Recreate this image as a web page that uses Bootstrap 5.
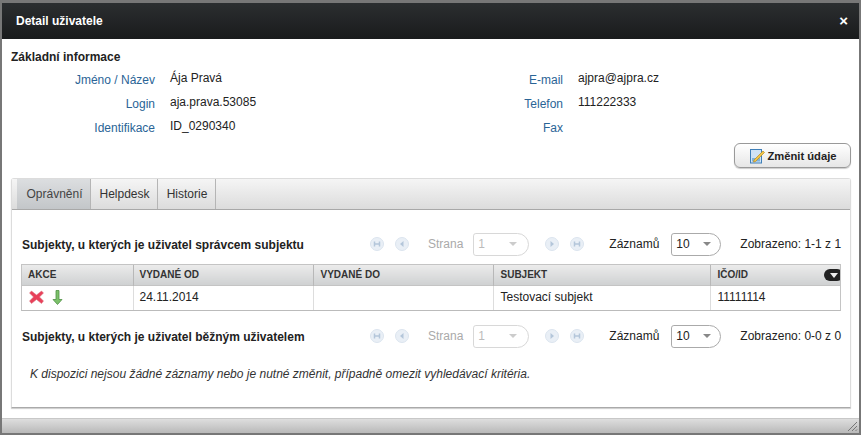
<!DOCTYPE html>
<html lang="cs"><head><meta charset="utf-8"><title>Detail uživatele</title>
<link rel="stylesheet" href="https://cdn.jsdelivr.net/npm/bootstrap@5.3.0/dist/css/bootstrap.min.css">
<style>
html,body{height:435px;overflow:hidden;background:#fff}
body{font:12px/14px "Liberation Sans",Arial,sans-serif;color:#222}
.dlg{height:435px;border:solid #777;border-width:3px 2px 2px 2px;background:#fff}
.dlg-title{height:36px;background:linear-gradient(#2b2e30,#191b1c);color:#fff;font-weight:700;padding:0 14px;flex:none}
.dlg-x{font-size:15px;line-height:14px;font-weight:700;margin-right:-3px;color:#fff}
.dlg-body{padding:0 8px 0 9px;flex:1;min-height:0}
.sect{font-weight:700;height:14px;margin-top:11px}
.inforow{height:24px}
.infocol{width:408px}
.lab{width:144px;text-align:right;color:#2a6496;padding-top:5px;flex:none}
.val{margin-left:15px;padding-top:3px}
.inforows{margin-top:4px}
.chgbtn{width:117px;height:25px;margin-top:3px;border:1px solid #999;border-radius:6px;background:linear-gradient(#fff,#e6e6e6);font-weight:700;font-size:11.2px;box-shadow:0 1px 1px #ccc;gap:3px;color:#222}
.tabpanel{height:231px;margin-top:10px;border:1px solid #dcdcdc;border-bottom-color:#aaa;border-radius:3px 3px 0 0;box-shadow:0 1px 1px #ccc}
.tabbar{height:31px;background:linear-gradient(#f5f5f5,#dcdcdc);border-bottom:1px solid #a8a8a8;padding-left:5px;flex:none}
.tabit{color:#333;border-right:1px solid #b5b5b5;height:30px;display:flex;align-items:center;justify-content:center;text-decoration:none}
.tabit.on{background:linear-gradient(#dcdee0,#c3c6c9);width:74px;padding-left:2px;color:#444}
.tabit.tb2{width:67px;padding-left:1px}
.tabit.tb3{width:58px;padding-left:1px}
.tabinner{padding:0 10px}
.pgrow{height:24px}
.pgrow.r1{margin-top:22px}
.pgrow.r2{margin-top:13px}
.pgtitle{width:348px;font-weight:700;flex:none;padding-top:2px}
.pgic{width:14px;height:14px;flex:none}
.pgic1{margin-right:11px}
.pgic3{margin:0 11px 0 16px}
.strana{color:#aaa;margin:0 10px 0 19px;width:36px}
.sel{width:56px;height:23px;border:1px solid #d8d8d8;border-radius:3px 12px 12px 3px;padding-left:4px;color:#bbb;justify-content:space-between;padding-right:11px;flex:none}
.sel.act{width:50px;border-color:#aaa;color:#222;padding-right:9px;margin-left:12px}
.caret{width:0;height:0;border:4px solid transparent;border-top:4px solid #888;border-bottom:0}
.sel:not(.act) .caret{border-top-color:#ccc}
.zaz{margin-left:25px;width:50px}
.zob{margin-left:19px;white-space:nowrap}
.gridwrap{margin:8px 0 0 -1px;width:820px;height:47px;border:1px solid #c4c4c4;border-bottom-color:#bbb;position:relative;overflow:hidden}
.gridt{width:818px;table-layout:fixed;margin:0;--bs-table-bg:transparent;border-collapse:collapse;font-size:12px}
.gridt th{height:20px;padding:0 6px;font-size:10px;font-weight:700;color:#333;background:linear-gradient(#ebebeb,#cfd1d2);border:0;border-right:1px solid #b8b8b8;vertical-align:middle}
.gridt td{height:25px;padding:0 6px 2px;border:0;border-right:1px solid #ddd;vertical-align:middle;color:#222}
.gridt tr>*:nth-child(n+3){padding-left:7px}
.gridt tr>*:last-child{border-right:0}
.gridt thead{border-bottom:1px solid #c4c4c4}
.acts{gap:8px;padding-top:1px;padding-left:1px}
.colmenu{position:absolute;right:-3px;top:4px;width:19px;height:12px;border-radius:6px;background:#222;display:flex;align-items:center;justify-content:center}
.colmenu i{display:block;width:0;height:0;border:4px solid transparent;border-top:5px solid #eee;border-bottom:0}
.note{font-style:italic;margin:19px 0 0 8px;color:#333}
.dlg-foot{height:15px;margin-top:10px;background:linear-gradient(#dedede,#b9b9b9);border-top:1px solid #c8c8c8;flex:none;position:relative}
.grip{position:absolute;right:1px;bottom:1px}
</style></head>
<body>
<div class="dlg d-flex flex-column">
  <div class="dlg-title d-flex align-items-center justify-content-between"><span>Detail uživatele</span><span class="dlg-x">×</span></div>
  <div class="dlg-body d-flex flex-column">
    <div class="sect">Základní informace</div>
    <div class="d-flex inforows">
      <div class="infocol">
        <div class="d-flex inforow"><div class="lab">Jméno / Název</div><div class="val">Ája Pravá</div></div>
        <div class="d-flex inforow"><div class="lab">Login</div><div class="val">aja.prava.53085</div></div>
        <div class="d-flex inforow"><div class="lab">Identifikace</div><div class="val">ID_0290340</div></div>
      </div>
      <div class="infocol">
        <div class="d-flex inforow"><div class="lab">E-mail</div><div class="val">ajpra@ajpra.cz</div></div>
        <div class="d-flex inforow"><div class="lab">Telefon</div><div class="val">111222333</div></div>
        <div class="d-flex inforow"><div class="lab">Fax</div><div class="val"></div></div>
      </div>
    </div>
    <div class="d-flex justify-content-end">
      <div class="chgbtn d-flex align-items-center justify-content-center">
        <svg width="16" height="16" viewBox="0 0 16 16"><rect x="1.5" y="1.5" width="11" height="13.500" fill="#cfe3f5" stroke="#3f7fb8"/><rect x="3" y="10" width="8" height="3.500" fill="#7fb2dd"/><path d="M5 12 L14 3 L15.500 4.500 L6.500 13.500 L4.500 14Z" fill="#f0c64a" stroke="#b98a1e" stroke-width=".7"/></svg>
        <span>Změnit údaje</span>
      </div>
    </div>
    <div class="tabpanel d-flex flex-column">
      <div class="tabbar d-flex">
        <a class="tabit on">Oprávnění</a><a class="tabit tb2">Helpdesk</a><a class="tabit tb3">Historie</a>
      </div>
      <div class="tabinner">
        <div class="pgrow r1 d-flex align-items-center">
          <div class="pgtitle">Subjekty, u kterých je uživatel správcem subjektu</div>
          <svg class="pgic pgic1" viewBox="0 0 14 14"><circle cx="7" cy="7" r="6.500" fill="#e9eff6" stroke="#dbe4ee"/><path d="M4.500 4.500v5M9.500 4.500v5M4.500 7h5" stroke="#b4c6da" stroke-width="1.500" fill="none"/></svg>
          <svg class="pgic" viewBox="0 0 14 14"><circle cx="7" cy="7" r="6.500" fill="#e9eff6" stroke="#dbe4ee"/><path d="M8.500 4v6L5 7z" fill="#b4c6da"/></svg>
          <span class="strana">Strana</span>
          <div class="sel d-flex align-items-center"><span>1</span><i class="caret"></i></div>
          <svg class="pgic pgic3" viewBox="0 0 14 14"><circle cx="7" cy="7" r="6.500" fill="#e9eff6" stroke="#dbe4ee"/><path d="M5.500 4v6L9 7z" fill="#b4c6da"/></svg>
          <svg class="pgic" viewBox="0 0 14 14"><circle cx="7" cy="7" r="6.500" fill="#e9eff6" stroke="#dbe4ee"/><path d="M4.500 4.500v5M9.500 4.500v5M4.500 7h5" stroke="#b4c6da" stroke-width="1.500" fill="none"/></svg>
          <span class="zaz">Záznamů</span>
          <div class="sel act d-flex align-items-center"><span>10</span><i class="caret"></i></div>
          <span class="zob">Zobrazeno: 1-1 z 1</span>
        </div>
        <div class="gridwrap">
          <table class="table gridt">
            <colgroup><col style="width:111px"><col style="width:180px"><col style="width:180px"><col style="width:217px"><col></colgroup>
            <thead><tr><th>AKCE</th><th>VYDANÉ OD</th><th>VYDANÉ DO</th><th>SUBJEKT</th><th>IČO/ID</th></tr></thead>
            <tbody><tr>
              <td><div class="d-flex acts align-items-center">
                <svg width="15" height="14" viewBox="0 0 15 14"><path d="M2.500 1 7.500 5 12.500 1 14.500 3 10.500 7 14.500 11 12.500 13.500 7.500 9.500 2.500 13.500 .5 11 4.500 7 .5 3Z" fill="#e8405a" stroke="#d9737f" stroke-width=".5"/></svg>
                <svg width="11" height="15" viewBox="0 0 11 15"><path d="M4 .5h3v9h3L5.500 14.500 1 9.500h3Z" fill="#7cc06a" stroke="#4f9145" stroke-width=".8"/></svg>
              </div></td>
              <td>24.11.2014</td><td></td><td>Testovací subjekt</td><td>11111114</td>
            </tr></tbody>
          </table>
          <div class="colmenu"><i></i></div>
        </div>
        <div class="pgrow r2 d-flex align-items-center">
          <div class="pgtitle">Subjekty, u kterých je uživatel běžným uživatelem</div>
          <svg class="pgic pgic1" viewBox="0 0 14 14"><circle cx="7" cy="7" r="6.500" fill="#e9eff6" stroke="#dbe4ee"/><path d="M4.500 4.500v5M9.500 4.500v5M4.500 7h5" stroke="#b4c6da" stroke-width="1.500" fill="none"/></svg>
          <svg class="pgic" viewBox="0 0 14 14"><circle cx="7" cy="7" r="6.500" fill="#e9eff6" stroke="#dbe4ee"/><path d="M8.500 4v6L5 7z" fill="#b4c6da"/></svg>
          <span class="strana">Strana</span>
          <div class="sel d-flex align-items-center"><span>1</span><i class="caret"></i></div>
          <svg class="pgic pgic3" viewBox="0 0 14 14"><circle cx="7" cy="7" r="6.500" fill="#e9eff6" stroke="#dbe4ee"/><path d="M5.500 4v6L9 7z" fill="#b4c6da"/></svg>
          <svg class="pgic" viewBox="0 0 14 14"><circle cx="7" cy="7" r="6.500" fill="#e9eff6" stroke="#dbe4ee"/><path d="M4.500 4.500v5M9.500 4.500v5M4.500 7h5" stroke="#b4c6da" stroke-width="1.500" fill="none"/></svg>
          <span class="zaz">Záznamů</span>
          <div class="sel act d-flex align-items-center"><span>10</span><i class="caret"></i></div>
          <span class="zob">Zobrazeno: 0-0 z 0</span>
        </div>
        <div class="note">K dispozici nejsou žádné záznamy nebo je nutné změnit, případně omezit vyhledávací kritéria.</div>
      </div>
    </div>
  </div>
  <div class="dlg-foot"><svg class="grip" width="12" height="12" viewBox="0 0 12 12"><path d="M11 2 2 11M11 6 6 11M11 9.500 9.500 11" stroke="#777" fill="none"/></svg></div>
</div>
</body></html>
